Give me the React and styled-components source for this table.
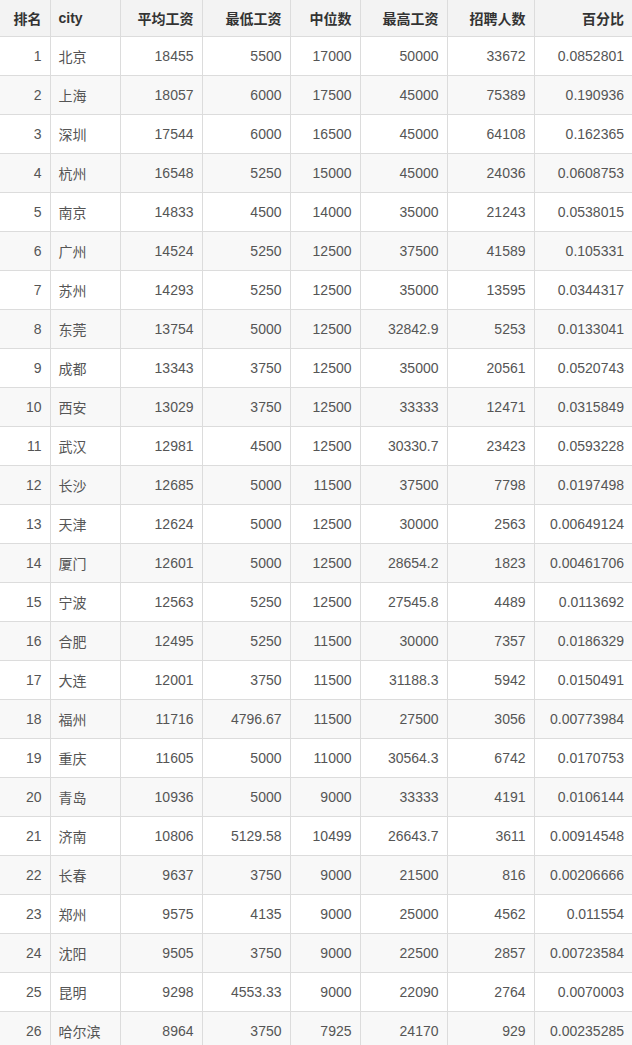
import React from 'react';
import styled, { createGlobalStyle } from 'styled-components';

const GlobalStyle = createGlobalStyle`
  html, body {
    margin: 0;
    padding: 0;
    background: #fff;
    overflow: hidden;
  }
  body {
    font-family: 'Liberation Sans', 'Noto Sans CJK SC', sans-serif;
  }
`;

const Table = styled.table`
  width: 632px;
  border-collapse: collapse;
  table-layout: fixed;
  font-size: 14px;
  color: #555;
`;

const HeadCell = styled.th`
  height: 36px;
  padding: 0 8px;
  background: #f3f3f3;
  color: #333;
  font-weight: bold;
  text-align: ${(p) => (p.$left ? 'left' : 'right')};
  border-bottom: 1px solid #dcdcdc;
  border-left: ${(p) => (p.$first ? 'none' : '1px solid #dcdcdc')};
  white-space: nowrap;
`;

const Row = styled.tr`
  background: ${(p) => (p.$even ? '#f8f8f8' : '#fff')};
`;

const Cell = styled.td`
  height: 38px;
  padding: 0 8px;
  text-align: ${(p) => (p.$left ? 'left' : 'right')};
  border-bottom: 1px solid #dcdcdc;
  border-left: ${(p) => (p.$first ? 'none' : '1px solid #dcdcdc')};
  white-space: nowrap;
`;

const columns = [
  { title: '排名', width: 50 },
  { title: 'city', width: 70, left: true },
  { title: '平均工资', width: 82 },
  { title: '最低工资', width: 88 },
  { title: '中位数', width: 70 },
  { title: '最高工资', width: 87 },
  { title: '招聘人数', width: 87 },
  { title: '百分比', width: 98 },
];

const rows = [
  ['北京', 18455, 5500, 17000, 50000, 33672, '0.0852801'],
  ['上海', 18057, 6000, 17500, 45000, 75389, '0.190936'],
  ['深圳', 17544, 6000, 16500, 45000, 64108, '0.162365'],
  ['杭州', 16548, 5250, 15000, 45000, 24036, '0.0608753'],
  ['南京', 14833, 4500, 14000, 35000, 21243, '0.0538015'],
  ['广州', 14524, 5250, 12500, 37500, 41589, '0.105331'],
  ['苏州', 14293, 5250, 12500, 35000, 13595, '0.0344317'],
  ['东莞', 13754, 5000, 12500, '32842.9', 5253, '0.0133041'],
  ['成都', 13343, 3750, 12500, 35000, 20561, '0.0520743'],
  ['西安', 13029, 3750, 12500, 33333, 12471, '0.0315849'],
  ['武汉', 12981, 4500, 12500, '30330.7', 23423, '0.0593228'],
  ['长沙', 12685, 5000, 11500, 37500, 7798, '0.0197498'],
  ['天津', 12624, 5000, 12500, 30000, 2563, '0.00649124'],
  ['厦门', 12601, 5000, 12500, '28654.2', 1823, '0.00461706'],
  ['宁波', 12563, 5250, 12500, '27545.8', 4489, '0.0113692'],
  ['合肥', 12495, 5250, 11500, 30000, 7357, '0.0186329'],
  ['大连', 12001, 3750, 11500, '31188.3', 5942, '0.0150491'],
  ['福州', 11716, '4796.67', 11500, 27500, 3056, '0.00773984'],
  ['重庆', 11605, 5000, 11000, '30564.3', 6742, '0.0170753'],
  ['青岛', 10936, 5000, 9000, 33333, 4191, '0.0106144'],
  ['济南', 10806, '5129.58', 10499, '26643.7', 3611, '0.00914548'],
  ['长春', 9637, 3750, 9000, 21500, 816, '0.00206666'],
  ['郑州', 9575, 4135, 9000, 25000, 4562, '0.011554'],
  ['沈阳', 9505, 3750, 9000, 22500, 2857, '0.00723584'],
  ['昆明', 9298, '4553.33', 9000, 22090, 2764, '0.0070003'],
  ['哈尔滨', 8964, 3750, 7925, 24170, 929, '0.00235285'],
];

export default function App() {
  return (
    <>
      <GlobalStyle />
      <Table>
        <colgroup>
          {columns.map((c) => (
            <col key={c.title} style={{ width: c.width }} />
          ))}
        </colgroup>
        <thead>
          <tr>
            {columns.map((c, i) => (
              <HeadCell key={c.title} $left={c.left} $first={i === 0}>
                {c.title}
              </HeadCell>
            ))}
          </tr>
        </thead>
        <tbody>
          {rows.map((r, i) => (
            <Row key={r[0]} $even={i % 2 === 1}>
              <Cell $first>{i + 1}</Cell>
              {r.map((v, j) => (
                <Cell key={j} $left={j === 0}>
                  {v}
                </Cell>
              ))}
            </Row>
          ))}
        </tbody>
      </Table>
    </>
  );
}
